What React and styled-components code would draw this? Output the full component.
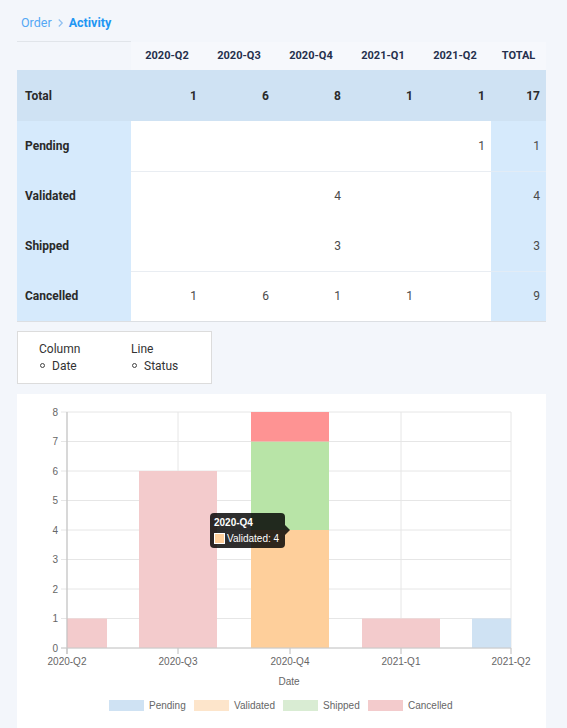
import React from "react";
import styled, { createGlobalStyle } from "styled-components";

const GlobalStyle = createGlobalStyle`
  body {
    margin: 0;
    background: #f3f6fb;
    font-family: Roboto, "Liberation Sans", sans-serif;
  }
`;

const quarters = ["2020-Q2", "2020-Q3", "2020-Q4", "2021-Q1", "2021-Q2"];

const rows = [
  { label: "Pending", values: ["", "", "", "", 1], total: 1, divider: true },
  { label: "Validated", values: ["", "", 4, "", ""], total: 4, divider: false },
  { label: "Shipped", values: ["", "", 3, "", ""], total: 3, divider: true },
  { label: "Cancelled", values: [1, 6, 1, 1, ""], total: 9, divider: false },
];

const totals = [1, 6, 8, 1, 1];

function App() {
  return (
    <Page>
      <GlobalStyle />
      <Breadcrumb>
        <span className="link">Order</span>
        <Chevron viewBox="0 0 8 10">
          <path d="M2 1l4 4-4 4" fill="none" stroke="#8fbff0" strokeWidth="1.4" />
        </Chevron>
        <span className="current">Activity</span>
      </Breadcrumb>
      <Pivot>
        <colgroup>
          <col style={{ width: 114 }} />
          {quarters.map((q) => (
            <col key={q} style={{ width: 72 }} />
          ))}
          <col style={{ width: 55 }} />
        </colgroup>
        <thead>
          <tr>
            <Corner />
            {quarters.map((q) => (
              <HeadCell key={q}>{q}</HeadCell>
            ))}
            <HeadCell>TOTAL</HeadCell>
          </tr>
        </thead>
        <tbody>
          <TotalRow>
            <RowLabel $total>Total</RowLabel>
            {totals.map((t, i) => (
              <ValueCell key={i} $bold>{t}</ValueCell>
            ))}
            <ValueCell $bold>17</ValueCell>
          </TotalRow>
          {rows.map((r) => (
            <BodyRow key={r.label}>
              <RowLabel>{r.label}</RowLabel>
              {r.values.map((v, i) => (
                <ValueCell key={i} $divider={r.divider}>{v}</ValueCell>
              ))}
              <TotalCell $divider={r.divider}>{r.total}</TotalCell>
            </BodyRow>
          ))}
        </tbody>
      </Pivot>

      <ConfigBox>
        <ConfigGroup>
          <span>Column</span>
          <Bullet>Date</Bullet>
        </ConfigGroup>
        <ConfigGroup>
          <span>Line</span>
          <Bullet>Status</Bullet>
        </ConfigGroup>
      </ConfigBox>

      <ChartPanel>
        <BarChart />
      </ChartPanel>
    </Page>
  );
}

const X1 = 494;
const yOf = (v) => 254 - v * 29.5;
const ticksX = [50, 161, 273, 384, 494];

const bars = [
  { x: 50, w: 40, from: 0, to: 1, fill: "#f3cbcc" },
  { x: 122, w: 78, from: 0, to: 6, fill: "#f3cbcc" },
  { x: 234, w: 78, from: 0, to: 4, fill: "#fecf9b" },
  { x: 234, w: 78, from: 4, to: 7, fill: "#b8e4a7" },
  { x: 234, w: 78, from: 7, to: 8, fill: "#fe9393" },
  { x: 345, w: 78, from: 0, to: 1, fill: "#f3cbcc" },
  { x: 455, w: 39, from: 0, to: 1, fill: "#cfe2f3" },
];

const legend = [
  { x: 92, label: "Pending", fill: "#cfe2f3" },
  { x: 177, label: "Validated", fill: "#fde5cb" },
  { x: 266, label: "Shipped", fill: "#d9ecd3" },
  { x: 351, label: "Cancelled", fill: "#f3cbcc" },
];

function BarChart() {
  return (
    <svg width="529" height="335" viewBox="0 0 529 335" fontFamily="'Liberation Sans', Arial, sans-serif" fontSize="10">
      {Array.from({ length: 9 }).map((_, v) => (
        <g key={v}>
          <line x1={44} x2={X1} y1={yOf(v)} y2={yOf(v)} stroke="#e6e6e6" />
          <text x={41} y={yOf(v) + 3.5} textAnchor="end" fill="#666">{v}</text>
        </g>
      ))}
      {ticksX.map((x) => (
        <line key={x} x1={x} x2={x} y1={18} y2={260} stroke="#e6e6e6" />
      ))}
      {bars.map((b, i) => (
        <rect key={i} x={b.x} y={yOf(b.to)} width={b.w} height={yOf(b.from) - yOf(b.to)} fill={b.fill} />
      ))}
      <line x1={50} x2={50} y1={18} y2={260} stroke="#bdbdbd" />
      <line x1={44} x2={X1} y1={254} y2={254} stroke="#c8c8c8" />
      {ticksX.map((x, i) => (
        <g key={i}>
          <line x1={x} x2={x} y1={254} y2={260} stroke="#c8c8c8" />
          <text x={x} y={271} textAnchor="middle" fill="#666">{quarters[i]}</text>
        </g>
      ))}
      <text x={272} y={291} textAnchor="middle" fill="#666">Date</text>
      {legend.map((l) => (
        <g key={l.label}>
          <rect x={l.x} y={306} width={35} height={11} fill={l.fill} />
          <text x={l.x + 40} y={315} fill="#666">{l.label}</text>
        </g>
      ))}
      <rect x={193} y={119} width={75} height={35} rx={4} fill="rgba(0,0,0,0.82)" />
      <path d="M268 131 L273 136 L268 141 Z" fill="rgba(0,0,0,0.82)" />
      <text x={197} y={132} fill="#fff" fontWeight="bold">2020-Q4</text>
      <rect x={197.5} y={139.5} width={10} height={10} fill="#fecf9b" stroke="#fff" />
      <text x={210} y={148} fill="#fff">Validated: 4</text>
    </svg>
  );
}

const Page = styled.div`
  padding: 0 21px 0 17px;
`;

const Breadcrumb = styled.div`
  display: flex;
  align-items: center;
  gap: 5px;
  height: 41px;
  padding: 4px 0 0 4px;
  box-sizing: border-box;
  font-size: 12.5px;
  .link {
    color: #55a8f5;
  }
  .current {
    color: #2196f3;
    font-weight: 700;
  }
`;

const Chevron = styled.svg`
  width: 7px;
  height: 10px;
`;

const Pivot = styled.table`
  width: 529px;
  border-collapse: collapse;
  table-layout: fixed;
  font-size: 12px;
  border-bottom: 1px solid #dcdfe3;
`;

const Corner = styled.th`
  border-top: 1px solid #e1e5ea;
  height: 28px;
  padding: 0;
`;

const HeadCell = styled.th`
  height: 28px;
  padding: 0;
  font-size: 11px;
  font-weight: 700;
  color: #25304d;
  text-align: center;
  background: #f6f8fc;
`;

const TotalRow = styled.tr`
  background: #cfe2f3;
  height: 51px;
`;

const BodyRow = styled.tr`
  height: 50px;
`;

const RowLabel = styled.td`
  padding: 0 8px;
  font-weight: 700;
  color: #2a2a2a;
  background: ${(p) => (p.$total ? "#cfe2f3" : "#d6eafc")};
`;

const ValueCell = styled.td`
  padding: 0 6px 0 0;
  text-align: right;
  color: ${(p) => (p.$bold ? "#2a2a2a" : "#4a4a4a")};
  font-weight: ${(p) => (p.$bold ? 700 : 400)};
  background: ${(p) => (p.$bold ? "transparent" : "#fff")};
  border-bottom: ${(p) => (p.$divider ? "1px solid #e9edf2" : "none")};
`;

const TotalCell = styled.td`
  padding: 0 6px 0 0;
  text-align: right;
  color: #4a4a4a;
  background: #d6eafc;
  border-bottom: ${(p) => (p.$divider ? "1px solid #e2ecf6" : "none")};
`;

const ConfigBox = styled.div`
  display: flex;
  width: 195px;
  height: 53px;
  box-sizing: border-box;
  margin-top: 9px;
  padding: 10px 0 0 21px;
  background: #fff;
  border: 1px solid #dcdcdc;
  font-size: 12px;
  color: #333;
`;

const ConfigGroup = styled.div`
  display: flex;
  flex-direction: column;
  flex-shrink: 0;
  gap: 3px;
  width: 92px;
`;

const Bullet = styled.span`
  display: flex;
  align-items: center;
  gap: 7px;
  padding-left: 1px;
  &::before {
    content: "";
    width: 3px;
    height: 3px;
    border: 1px solid #444;
    border-radius: 50%;
  }
`;

const ChartPanel = styled.div`
  margin-top: 10px;
  width: 529px;
  height: 335px;
  background: #fff;
`;

export default App;
